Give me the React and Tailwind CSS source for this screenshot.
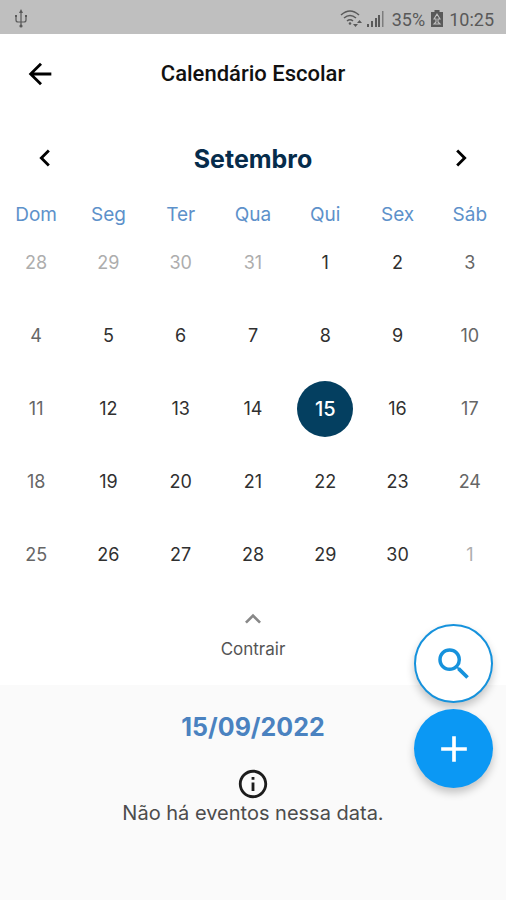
import { MdAdd, MdArrowBack, MdChevronLeft, MdChevronRight, MdExpandLess, MdInfoOutline, MdSearch } from 'react-icons/md';

const weekdays = ['Dom', 'Seg', 'Ter', 'Qua', 'Qui', 'Sex', 'Sáb'];
const weeks = [
  [28, 29, 30, 31, 1, 2, 3],
  [4, 5, 6, 7, 8, 9, 10],
  [11, 12, 13, 14, 15, 16, 17],
  [18, 19, 20, 21, 22, 23, 24],
  [25, 26, 27, 28, 29, 30, 1],
];

function dayStyle(week, column) {
  const outside = (week === 0 && column < 4) || (week === 4 && column === 6);
  if (week === 2 && column === 4) return 'bg-[#043f60] text-xl font-medium text-white';
  if (outside) return 'text-lg text-[#adadad]';
  if (column === 0 || column === 6) return 'text-lg text-[#666666]';
  return 'text-lg text-[#303030]';
}

function StatusBar() {
  return (
    <div className="flex h-[34px] items-center justify-between bg-[#bfbfbf] px-3 pt-1 text-[#595959]">
      <svg viewBox="0 0 18 20" className="h-5 w-[18px]" fill="none" stroke="currentColor" strokeWidth="1.2" aria-label="USB">
        <path d="M9 3v14M4 7v4q0 2 2 2h6q2 0 2-2V7" />
        <path d="M9 0l2 4H7zM3 6h2v2H3zM13 6h2v2h-2z" fill="currentColor" stroke="none" />
        <circle cx="9" cy="17" r="1.6" fill="currentColor" stroke="none" />
      </svg>
      <div className="flex items-center text-lg leading-6">
        <svg viewBox="0 0 24 18" className="mr-1 h-[18px] w-6" fill="none" stroke="currentColor" strokeWidth="1.6" aria-label="Wi-Fi">
          <path d="M2 5Q11 -3 20 5M5 8Q11 3 17 8M8 11Q11 8.500 14 11" />
          <circle cx="11" cy="13.500" r="1.300" fill="currentColor" stroke="none" />
          <path d="M14 14h5l-2.500 3zM18 13h5l-2.500-3z" fill="currentColor" stroke="none" />
        </svg>
        <svg viewBox="0 0 17 18" className="mr-2 h-[18px] w-[17px]" fill="currentColor" aria-label="Sinal">
          <path d="M0 14h2v3H0zM4 11h2v6H4zM8 8h2v9H8zM11 5h2v12h-2z" />
          <path d="M15 1h1.500v16H15z" opacity="0.65" />
        </svg>
        <span className="pt-0.5">35%</span>
        <svg viewBox="0 0 12 18" className="mx-1.5 h-[18px] w-3" aria-label="Bateria">
          <path d="M3.500 0h5v2H12v15H0V2h3.500z" fill="currentColor" />
          <path d="M6 4l-3 5h2v3l-2 2h6l-2-2V9h2z" fill="none" stroke="#bfbfbf" strokeWidth="1.1" />
        </svg>
        <span className="pt-0.5">10:25</span>
      </div>
    </div>
  );
}

export default function App() {
  return (
    <div className="relative flex min-h-screen flex-col bg-white font-[Inter,sans-serif]">
      <div className="font-[Roboto,sans-serif]">
        <StatusBar />
        <header className="grid h-20 grid-cols-[80px_1fr_80px] items-center">
          <button aria-label="Voltar" className="flex justify-center text-black">
            <MdArrowBack size={34} />
          </button>
          <h1 className="text-center text-[22px] leading-7 font-medium text-[#111111]">Calendário Escolar</h1>
        </header>
      </div>

      <main className="flex grow flex-col">
        <div className="mt-4 flex h-14 items-center justify-between px-7">
          <button aria-label="Mês anterior" className="text-black"><MdChevronLeft size={34} /></button>
          <h2 className="pt-0.5 text-[25px] leading-8 font-bold text-[#062c4b]">Setembro</h2>
          <button aria-label="Próximo mês" className="text-black"><MdChevronRight size={34} /></button>
        </div>

        <table className="mt-[18px] w-full table-fixed text-center">
          <thead>
            <tr>
              {weekdays.map((day) => (
                <th key={day} scope="col" className="p-0 text-[19px] leading-[22px] font-normal text-[#5d91ca]">{day}</th>
              ))}
            </tr>
          </thead>
          <tbody>
            {weeks.map((week, row) => (
              <tr key={row} className="h-[73px]">
                {week.map((day, column) => (
                  <td key={column} className="p-0">
                    <button className={`mx-auto flex size-14 items-center justify-center rounded-full ${dayStyle(row, column)}`}>
                      {day}
                    </button>
                  </td>
                ))}
              </tr>
            ))}
          </tbody>
        </table>

        <button className="mx-auto mt-3 flex flex-col items-center text-[17px] leading-6 text-[#555555]">
          <MdExpandLess size={32} className="text-[#888888]" />
          <span className="mt-0.5">Contrair</span>
        </button>

        <section className="mt-6 flex grow flex-col items-center bg-[#fafafa] pt-[26px]">
          <h3 className="text-[25px] leading-8 font-bold text-[#4a82c0]">15/09/2022</h3>
          <MdInfoOutline size={34} className="mt-6 text-[#1c1c1c]" />
          <p className="text-xl leading-6 text-[#4c4c4c]">Não há eventos nessa data.</p>
        </section>
      </main>

      <div className="fixed right-[13px] bottom-28 flex flex-col gap-1.5">
        <button aria-label="Buscar" className="flex size-[79px] items-center justify-center rounded-full border-2 border-[#1692dc] bg-white text-[#1692dc] shadow-[0_5px_9px_rgba(0,0,0,0.22)]">
          <MdSearch size={42} />
        </button>
        <button aria-label="Adicionar" className="flex size-[79px] items-center justify-center rounded-full bg-[#0b98f4] text-white shadow-[0_5px_9px_rgba(0,0,0,0.22)]">
          <MdAdd size={44} />
        </button>
      </div>
    </div>
  );
}
